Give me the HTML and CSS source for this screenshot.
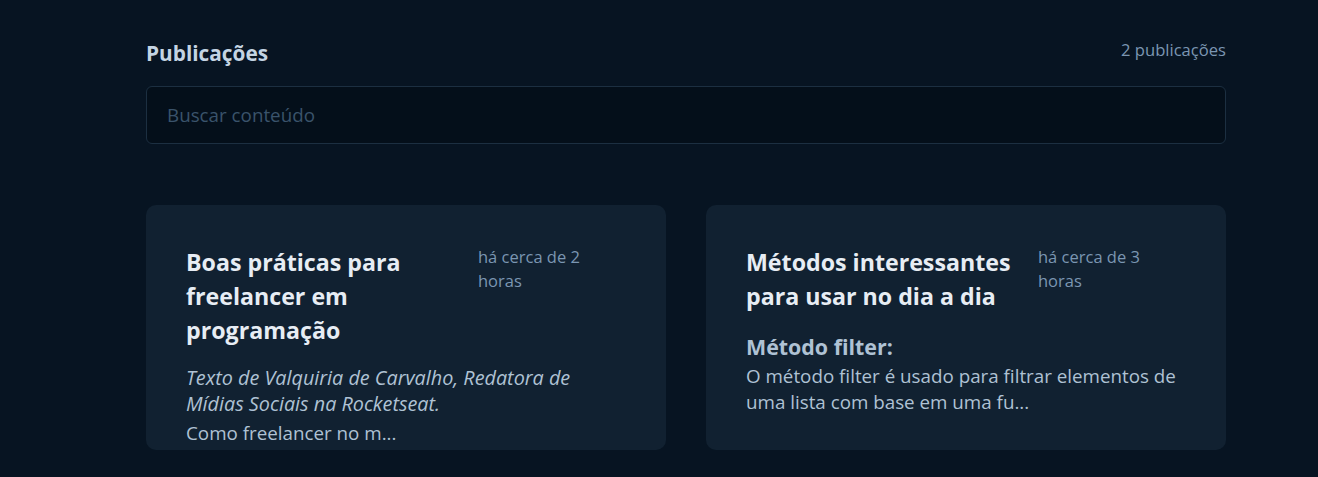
FILE: index.html
```html
<!DOCTYPE html>
<html lang="pt-BR">
<head>
<meta charset="utf-8">
<title>Publicações</title>
<link rel="stylesheet" href="styles.css">
</head>
<body>
<main class="container">
  <section class="search">
    <header class="search-header">
      <h2 class="search-title">Publicações</h2>
      <span class="search-count">2 publicações</span>
    </header>
    <input class="search-input" type="text" placeholder="Buscar conteúdo">
  </section>
  <section class="posts">
    <article class="post">
      <div class="post-head">
        <h3 class="post-title">Boas práticas para freelancer em programação</h3>
        <span class="post-time">há cerca de 2 horas</span>
      </div>
      <div class="post-body">
        <p class="post-text"><em class="post-em">Texto de Valquiria de Carvalho, Redatora de Mídias Sociais na Rocketseat.</em></p>
        <p class="post-text post-text-gap">Como freelancer no m...</p>
      </div>
    </article>
    <article class="post">
      <div class="post-head">
        <h3 class="post-title">Métodos interessantes para usar no dia a dia</h3>
        <span class="post-time">há cerca de 3 horas</span>
      </div>
      <div class="post-body">
        <h4 class="post-subtitle">Método filter:</h4>
        <p class="post-text">O método filter é usado para filtrar elementos de uma lista com base em uma fu...</p>
      </div>
    </article>
  </section>
</main>
</body>
</html>
```

FILE: styles.css
```css
* { box-sizing: border-box; margin: 0; padding: 0; }

html, body {
  background: #071422;
  color: #AFC2D4;
  font-family: "Open Sans", "Noto Sans", sans-serif;
}

.container {
  width: 1080px;
  margin-left: 146px;
  padding-top: 40px;
}

.search-header {
  display: flex;
  justify-content: space-between;
  align-items: center;
  height: 26px;
  margin-bottom: 20px;
}

.search-title {
  font-size: 20.8px;
  font-weight: 700;
  color: #C4D4E3;
  line-height: 26px;
}

.search-count {
  font-size: 16.6px;
  color: #7B96B2;
  line-height: 20px;
  align-self: flex-start;
}

.search-input {
  display: block;
  width: 100%;
  height: 58px;
  padding: 0 20px;
  background: #040F1A;
  border: 1px solid #1C2F41;
  border-radius: 6px;
  font-family: inherit;
  font-size: 18.8px;
  color: #C4D4E3;
  outline: none;
}

.search-input::placeholder { color: #3A536B; }

.posts {
  display: grid;
  grid-template-columns: 1fr 1fr;
  gap: 40px;
  margin-top: 61px;
}

.post {
  background: #112131;
  border-radius: 10px;
  height: 245px;
  padding: 40px 40px 0;
  overflow: hidden;
}

.post-head {
  display: flex;
  gap: 12px;
  align-items: flex-start;
}

.post-title {
  width: 280px;
  font-size: 23.2px;
  font-weight: 700;
  line-height: 34px;
  color: #E7EDF4;
}

.post-time {
  width: 120px;
  font-size: 16.5px;
  line-height: 24px;
  color: #7B96B2;
}

.post-body { margin-top: 18px; }

.post-subtitle {
  font-size: 21.4px;
  font-weight: 700;
  line-height: 32px;
  color: #AFC2D4;
}

.post-text {
  font-size: 18.8px;
  line-height: 26px;
  color: #AFC2D4;
}

.post-em {
  font-size: 19.8px;
}

.post-text-gap { margin-top: 3px; }
```
